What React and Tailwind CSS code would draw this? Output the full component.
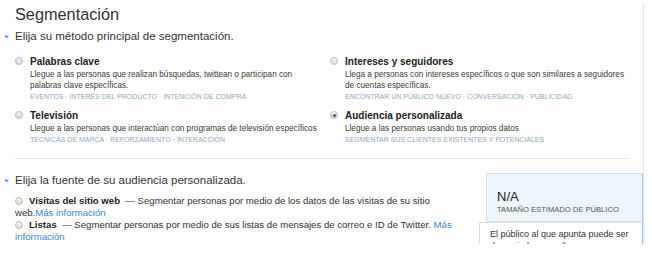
import React from 'react';

const Radio = ({ checked = false, className = '' }) => (
  <span
    className={`inline-block w-[8px] h-[8px] rounded-full border border-[#bdbdbd] bg-gradient-to-b from-[#f4f4f4] to-[#d9d9d9] relative shrink-0 ${className}`}
  >
    {checked && <span className="absolute left-[1.5px] top-[1.5px] w-[3px] h-[3px] rounded-full bg-[#555]" />}
  </span>
);

const Caret = () => (
  <svg width="5" height="4" viewBox="0 0 5 4" className="shrink-0">
    <path d="M0 0.5 L5 0.5 L2.5 3.5 Z" fill="#5b9bd5" />
  </svg>
);

const OPTIONS = [
  {
    title: 'Palabras clave',
    desc: 'Llegue a las personas que realizan búsquedas, twittean o participan con palabras clave específicas.',
    tags: 'EVENTOS · INTERÉS DEL PRODUCTO · INTENCIÓN DE COMPRA',
    width: 'w-[291px]',
  },
  {
    title: 'Intereses y seguidores',
    desc: 'Llega a personas con intereses específicos o que son similares a seguidores de cuentas específicas.',
    tags: 'ENCONTRAR UN PÚBLICO NUEVO · CONVERSACIÓN · PUBLICIDAD',
    width: 'w-[282px]',
  },
  {
    title: 'Televisión',
    desc: 'Llegue a las personas que interactúan con programas de televisión específicos',
    tags: 'TÉCNICAS DE MARCA · REFORZAMIENTO · INTERACCIÓN',
    width: 'w-[291px]',
  },
  {
    title: 'Audiencia personalizada',
    desc: 'Llegue a las personas usando tus propios datos',
    tags: 'SEGMENTAR SUS CLIENTES EXISTENTES Y POTENCIALES',
    checked: true,
    width: 'w-[282px]',
  },
];

const Option = ({ title, desc, tags, checked, width }) => (
  <div className="flex items-start">
    <Radio checked={checked} className="mt-[3px]" />
    <div className={`ml-[7px] ${width}`}>
      <div className="text-[10px] leading-[15px] font-bold text-[#222]">{title}</div>
      <div className="text-[8.2px] leading-[11px] text-[#3a3a3a]">{desc}</div>
      <div className="text-[7px] leading-[11px] text-[#8ea9c2]">{tags}</div>
    </div>
  </div>
);

export default function App() {
  return (
    <div className="w-[652px] h-[264px] bg-white overflow-hidden font-['Liberation_Sans',Arial,sans-serif]">
      <div className="w-[644px] h-[241px] border-r border-[#e6e6e6] mt-[3px] overflow-hidden">
        <div className="pl-[15px] pt-[1px] text-[16.3px] leading-[20px] text-[#333]">Segmentación</div>
        <div className="flex items-center pl-[4px] mt-[4px] h-[18px]">
          <Caret />
          <span className="ml-[6px] text-[11.5px] text-[#333]">Elija su método principal de segmentación.</span>
        </div>
        <div className="grid grid-cols-[315px_1fr] pl-[15px] mt-[8px] gap-y-[6px]">
          {OPTIONS.map((o) => (
            <Option key={o.title} {...o} />
          ))}
        </div>
        <div className="ml-[15px] w-[614px] border-t border-[#e8e8e8] mt-[13px]" />
        <div className="flex items-start">
          <div className="w-[460px] shrink-0">
            <div className="flex items-center pl-[4px] mt-[13px] h-[18px]">
              <Caret />
              <span className="ml-[6px] text-[11.5px] text-[#333]">Elija la fuente de su audiencia personalizada.</span>
            </div>
            <div className="pl-[15px] mt-[5px] text-[9.6px] leading-[12px] text-[#333]">
              <p className="w-[425px]">
                <Radio className="align-[-1px] mr-[6px]" />
                <b className="text-[#222]">Visitas del sitio web</b>
                {' \u00a0— Segmentar personas por medio de los datos de las visitas de su sitio web.'}
                <a className="text-[#3b86cc]">Más información</a>
              </p>
              <p>
                <Radio className="align-[-1px] mr-[6px]" />
                <b className="text-[#222]">Listas</b>
                {' \u00a0— Segmentar personas por medio de sus listas de mensajes de correo e ID de Twitter. '}
                <a className="text-[#3b86cc]">Más información</a>
              </p>
            </div>
          </div>
          <div className="ml-[19px] mt-[14px] flex-1 relative">
            <div className="ml-[7px] bg-[#eef5fc] border border-[#cfe2f3] border-r-[#9fc8ec] pl-[10px] pt-[15px] h-[49px]">
              <div className="text-[13px] leading-[15px] text-[#222]">N/A</div>
              <div className="text-[7.6px] leading-[12px] text-[#555]">TAMAÑO ESTIMADO DE PÚBLICO</div>
            </div>
            <div className="bg-white border border-[#dcdcdc] border-r-[#9fc8ec] pl-[10px] pt-[5px] text-[9px] leading-[12px] text-[#333]">
              El público al que apunta puede ser demasiado pequeño para usar
            </div>
          </div>
        </div>
      </div>
    </div>
  );
}
